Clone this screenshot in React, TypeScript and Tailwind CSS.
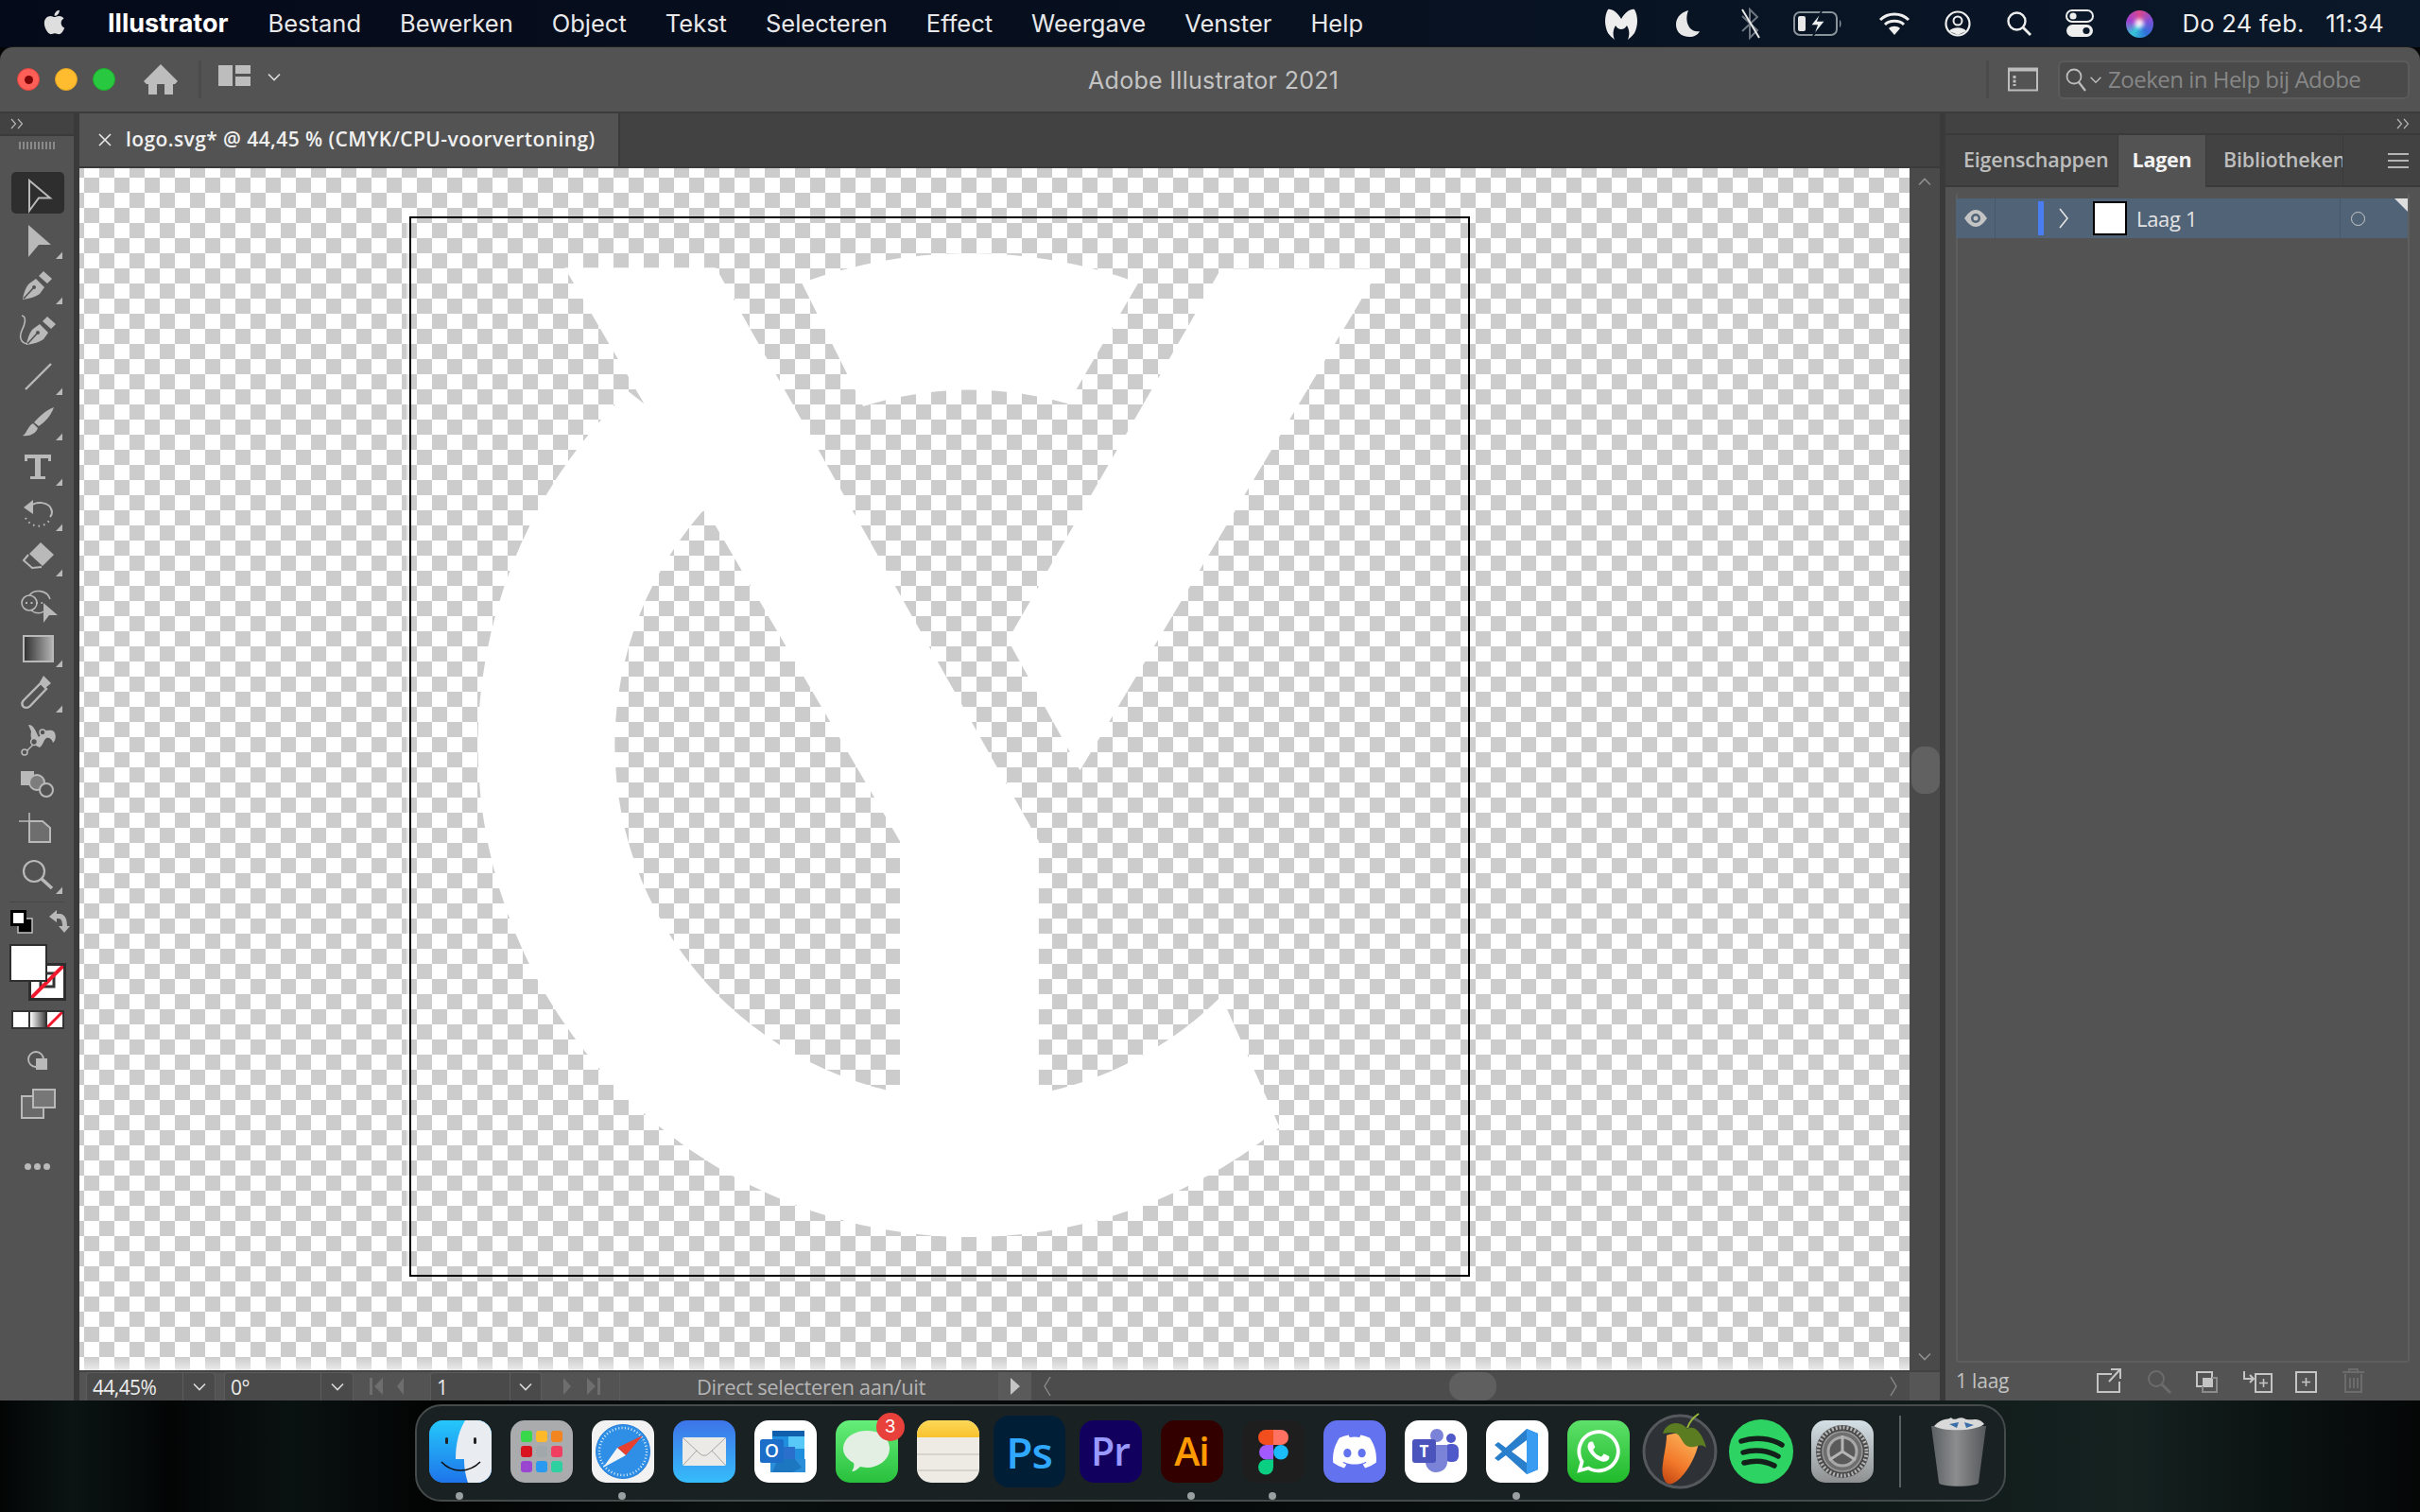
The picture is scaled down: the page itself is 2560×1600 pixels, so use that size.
import type { ReactNode } from "react";
import { FaApple, FaDiscord, FaWhatsapp } from "react-icons/fa";

const MENUS = ["Bestand", "Bewerken", "Object", "Tekst", "Selecteren", "Effect", "Weergave", "Venster", "Help"];
const C = "#b9b9b9";

// Tool icons are drawn in a 78x48 box, one slot per tool
function Flag() {
  return <path d="M66 36.5V44H59Z" fill={C} />;
}

const Nib = () => (
  <>
    <path d="M24 39C25 31 28 25 31 22L38 17L47 26L42 33C38 36 32 38 24 39Z" fill={C} />
    <path d="M25 38L35 27" stroke="#535353" strokeWidth="1.6" />
    <circle cx="36" cy="26" r="2" fill="#535353" />
    <path d="M41 14L46 9L55 17L50 22Z" fill={C} />
  </>
);

const TOOLS: ReactNode[] = [
  <path key="s" d="M31 9L53 27.5H41L31 41Z" fill="none" stroke={C} strokeWidth="2" />,
  <g key="d"><path d="M30 8L54 29H41L30 42Z" fill={C} /><Flag /></g>,
  <g key="p"><Nib /><Flag /></g>,
  <g key="c">
    <g transform="translate(4 0)"><Nib /></g>
    <path d="M23 8C29 9 26 18 23 24C20 31 22 37 29 38" fill="none" stroke={C} strokeWidth="1.6" />
  </g>,
  <g key="l"><path d="M27 38L54 11" stroke={C} strokeWidth="2.4" /><Flag /></g>,
  <g key="b">
    <path d="M57 9C54 18 47 25 41 29L36 25C42 18 49 12 57 9Z" fill={C} />
    <path d="M35 26L40 31C38 37 31 40 24 39C29 36 29 29 35 26Z" fill={C} />
    <Flag />
  </g>,
  <g key="t">
    <path d="M26 18V11H54V18H51V15H43V34H48V37H32V34H37V15H29V18Z" fill={C} />
    <Flag />
  </g>,
  <g key="r">
    <path d="M30 20C36 11 54 12 55 24C55 26 54 28 53 29" fill="none" stroke={C} strokeWidth="2" />
    <path d="M25 19L35 11V26Z" fill={C} />
    <path d="M27 30C33 41 46 41 52 33" fill="none" stroke={C} strokeWidth="2" strokeDasharray="1.6 4" />
    <Flag />
  </g>,
  <g key="e">
    <path d="M43 8L57 21L45 33L31 20Z" fill={C} />
    <path d="M30 21L25 27L34 35L44 34" fill="none" stroke={C} strokeWidth="2" />
    <Flag />
  </g>,
  <g key="h">
    <circle cx="31" cy="24" r="8" fill="none" stroke={C} strokeWidth="1.6" />
    <path d="M31 16C36 9 50 10 53 20M33 32C38 36 44 35 46 33" fill="none" stroke={C} strokeWidth="1.6" />
    <path d="M27 24H45" stroke={C} strokeWidth="1.8" strokeDasharray="2 3.5" />
    <path d="M46 24L61 37H52L46 45Z" fill={C} />
  </g>,
  <g key="g">
    <rect x="25" y="11" width="31" height="27" fill="url(#grad)" stroke={C} strokeWidth="2" />
    <Flag />
  </g>,
  <g key="i">
    <path d="M46 5L54 13L48 18L42 12Z" fill={C} />
    <path d="M43 13L49 19L32 37C29 40 25 39 24 37C23 35 23 33 25 31Z" fill="none" stroke={C} strokeWidth="2.4" />
    <Flag />
  </g>,
  <g key="w">
    <path d="M30 9C36 9 37 15 41 22C46 15 53 13 57 16C60 20 59 26 56 28C55 24 52 22 49 23C46 25 46 30 42 33C36 31 31 24 33 16C32 14 31 11 30 9Z" fill={C} />
    <path d="M28 37L50 15" stroke={C} strokeWidth="1.4" />
    <circle cx="26" cy="38" r="3" fill="#535353" stroke={C} strokeWidth="1.5" />
    <circle cx="36" cy="27" r="3.4" fill="#535353" stroke={C} strokeWidth="1.5" />
    <circle cx="45" cy="17" r="3" fill="#535353" stroke={C} strokeWidth="1.5" />
  </g>,
  <g key="q">
    <rect x="22" y="10" width="14" height="15" fill={C} />
    <circle cx="39" cy="22" r="8" fill="#7d7d7d" stroke={C} strokeWidth="2" />
    <circle cx="49" cy="30" r="7" fill="#535353" stroke={C} strokeWidth="2" />
  </g>,
  <g key="a">
    <path d="M20 15H34M31 6V19" stroke={C} strokeWidth="1.6" />
    <path d="M31 15H45L53 22V37H31Z" fill="#6e6e6e" stroke={C} strokeWidth="2" />
  </g>,
  <g key="z">
    <circle cx="36" cy="20" r="11" fill="none" stroke={C} strokeWidth="2.2" />
    <path d="M44 28L55 38" stroke={C} strokeWidth="3.6" />
    <Flag />
  </g>,
];

function Slot({ children }: { children: ReactNode }) {
  return (
    <svg width="78" height="48" viewBox="0 0 78 48" className="block shrink-0">
      <defs>
        <linearGradient id="grad" x1="0" x2="1">
          <stop offset="0" stopColor="#2f2f2f" />
          <stop offset="1" stopColor="#b5b5b5" />
        </linearGradient>
      </defs>
      {children}
    </svg>
  );
}

function Chevron({ className = "" }: { className?: string }) {
  return (
    <svg width="14" height="9" viewBox="0 0 14 9" className={className}>
      <path d="M1 1.5L7 7.5L13 1.5" fill="none" stroke="currentColor" strokeWidth="1.6" />
    </svg>
  );
}

function DoubleChevron() {
  return (
    <svg width="14" height="12" viewBox="0 0 14 12" className="text-[#b5b5b5]">
      <path d="M1 1L5.5 6L1 11M8 1L12.5 6L8 11" fill="none" stroke="currentColor" strokeWidth="1.2" />
    </svg>
  );
}

function ToolPanel() {
  return (
    <div className="w-[84px] shrink-0 flex bg-[#3a3a3a]">
      <div className="w-[78px] bg-[#535353] flex flex-col relative">
        <div className="h-[24px] bg-[#424242] border-b-2 border-[#3a3a3a] pl-[11px] flex items-center">
          <DoubleChevron />
        </div>
        <div className="h-[38px] flex justify-center pt-[6px]">
          <div className="w-[38px] h-[8px] bg-[repeating-linear-gradient(90deg,#8a8a8a_0_2px,transparent_2px_4px)]" />
        </div>
        <div className="relative">
          <div className="absolute left-[12px] top-0 w-[56px] h-[44px] rounded-[5px] bg-[#2e2e2e]" />
          <div className="relative flex flex-col">
            {TOOLS.map((t, i) => (
              <Slot key={i}>{t}</Slot>
            ))}
          </div>
        </div>
        <div className="mx-[10px] h-px bg-[#474747] mt-[4px]" />
        <ColorControls />
      </div>
    </div>
  );
}

function ColorControls() {
  return (
    <div className="flex flex-col">
      <svg width="78" height="34" viewBox="0 0 78 34" className="block mt-[6px]">
        <rect x="19" y="11" width="15" height="15" fill="#000" stroke="#c0c0c0" strokeWidth="1.5" />
        <rect x="11" y="2" width="17" height="17" fill="#c0c0c0" />
        <rect x="12.5" y="3.5" width="14" height="14" fill="#fff" stroke="#000" strokeWidth="3" />
        <path d="M52 9L60 2V6H64C69 7 71 12 71 19H74L68 26L62 19H66C66 14 65 11 62 11H60V15Z" fill={C} />
      </svg>
      <div className="relative h-[62px] ml-[10px] mt-[4px]">
        <div className="absolute left-[20px] top-[20px] w-[40px] h-[40px] bg-white border-[3px] border-[#2e2e2e] overflow-hidden">
          <svg viewBox="0 0 34 34" className="w-full h-full">
            <rect x="10" y="8" width="14" height="14" fill="none" stroke="#333" strokeWidth="3" />
            <path d="M0 34L34 0" stroke="#f0182c" strokeWidth="4" />
          </svg>
        </div>
        <div className="absolute left-0 top-0 w-[40px] h-[40px] bg-white border-[2px] border-[#2e2e2e]" />
      </div>
      <div className="ml-[12px] mt-[8px] w-[56px] h-[20px] flex border-2 border-[#333] gap-[2px] bg-[#333]">
        <div className="flex-1 bg-white" />
        <div className="flex-1 bg-[linear-gradient(90deg,#fff,#444)]" />
        <div className="flex-1 bg-white overflow-hidden">
          <svg viewBox="0 0 16 16" className="w-full h-full" preserveAspectRatio="none">
            <path d="M0 16L16 0" stroke="#f0182c" strokeWidth="3" />
          </svg>
        </div>
      </div>
      <svg width="78" height="98" viewBox="0 0 78 98" className="block mt-[21px]">
        <circle cx="38" cy="11" r="8" fill="none" stroke={C} strokeWidth="1.8" />
        <rect x="38" y="10" width="12" height="12" fill={C} />
        <rect x="23" y="50" width="23" height="23" fill="#6a6a6a" stroke={C} strokeWidth="2" />
        <rect x="35" y="43" width="23" height="19" fill="#777" stroke={C} strokeWidth="2" />
      </svg>
      <div className="flex justify-center gap-[3px] mt-[23px]">
        <div className="w-[7px] h-[7px] rounded-full bg-[#b9b9b9]" />
        <div className="w-[7px] h-[7px] rounded-full bg-[#b9b9b9]" />
        <div className="w-[7px] h-[7px] rounded-full bg-[#b9b9b9]" />
      </div>
    </div>
  );
}

function MenuBar() {
  return (
    <div className="h-[50px] shrink-0 flex items-center bg-[linear-gradient(90deg,#050a1a,#07101f_50%,#0a1829)] text-[#e8e8ea] text-[25.5px] pl-[43px] pr-[38px]">
      <FaApple className="text-[29px] text-[#dedede] -mt-[4px]" />
      <span className="font-bold text-[27px] ml-[42px] mr-[42px] text-white">Illustrator</span>
      <div className="flex gap-[41px]">
        {MENUS.map((m) => (
          <span key={m}>{m}</span>
        ))}
      </div>
      <div className="ml-auto flex items-center text-[#eeeeee]">
        <svg width="38" height="36" viewBox="0 0 38 36" className="mr-[38px]">
          <path d="M5 3C9 2 15 6 19 13C23 6 29 2 33 3C37 10 37 20 33 28C31 31 28 33 26 35C28 30 28 25 25 20C23 23 21 24 19 24C17 24 15 23 13 20C10 25 10 30 12 35C10 33 7 31 5 28C1 20 1 10 5 3Z" fill="#eee" />
        </svg>
        <svg width="27" height="30" viewBox="0 0 27 30" className="mr-[41px]">
          <path d="M14 1C6 3 1 9 1 16C1 24 7 29 15 29C20 29 24 27 26 23C16 25 9 14 14 1Z" fill="#e8e8e8" />
        </svg>
        <svg width="22" height="36" viewBox="0 0 22 36" className="mr-[35px]">
          <path d="M3 10L19 25L11 33V3L19 11L3 26" fill="none" stroke="#6e7680" strokeWidth="2" />
          <path d="M3 3L21 33" stroke="#e8e8e8" strokeWidth="2" />
        </svg>
        <svg width="52" height="26" viewBox="0 0 52 26" className="mr-[38px]">
          <rect x="1" y="1" width="45" height="24" rx="6" fill="none" stroke="#8a929a" strokeWidth="2" />
          <rect x="5" y="5" width="8" height="16" rx="2" fill="#e8e8e8" />
          <path d="M49 9V17C51 16 51 10 49 9Z" fill="#8a929a" />
          <path d="M30 0L18 15H25L21 26L34 10H26Z" fill="#eee" stroke="#0a1829" strokeWidth="1.5" />
        </svg>
        <svg width="34" height="26" viewBox="0 0 34 26" className="mr-[36px]">
          <path d="M2 9C10 1 24 1 32 9M7 14C12 9 22 9 27 14" fill="none" stroke="#eee" strokeWidth="3" />
          <path d="M11 18C14 15 20 15 23 18L17 25Z" fill="#eee" />
        </svg>
        <svg width="28" height="28" viewBox="0 0 28 28" className="mr-[37px]">
          <circle cx="14" cy="14" r="12.5" fill="none" stroke="#eee" strokeWidth="2.2" />
          <circle cx="14" cy="11" r="4.5" fill="none" stroke="#eee" strokeWidth="2" />
          <path d="M5 22C8 17 20 17 23 22L14 26Z" fill="#eee" />
        </svg>
        <svg width="28" height="28" viewBox="0 0 28 28" className="mr-[35px]">
          <circle cx="11.5" cy="11.5" r="9" fill="none" stroke="#eee" strokeWidth="2.4" />
          <path d="M18 18L26 26" stroke="#eee" strokeWidth="2.8" />
        </svg>
        <svg width="30" height="30" viewBox="0 0 30 30" className="mr-[34px]">
          <rect x="1" y="1" width="28" height="12" rx="6" fill="#0a1829" stroke="#eee" strokeWidth="2" />
          <circle cx="8" cy="7" r="3.6" fill="#eee" />
          <rect x="1" y="16" width="28" height="13" rx="6.5" fill="#eee" />
          <circle cx="22" cy="22.5" r="3.6" fill="#0a1829" />
        </svg>
        <div className="w-[29px] h-[29px] rounded-full bg-[conic-gradient(#d9478f,#7d4fd8,#2f6fd8,#34c6d8,#a03fd0,#d9478f)] mr-[31px] flex items-center justify-center">
          <div className="w-[10px] h-[10px] rounded-full bg-white/90 blur-[2px]" />
        </div>
        <span className="whitespace-pre tracking-[0.3px]">Do 24 feb.   11:34</span>
      </div>
    </div>
  );
}

function Toolbar() {
  return (
    <div className="h-[68px] shrink-0 flex items-center relative">
      <div className="w-[24px] h-[24px] rounded-full bg-[#ff5f57] border border-[#e0443e] ml-[18px] flex items-center justify-center">
        <div className="w-[9px] h-[9px] rounded-full bg-[#7e0508]" />
      </div>
      <div className="w-[24px] h-[24px] rounded-full bg-[#febc2e] border border-[#dea123] ml-[16px]" />
      <div className="w-[24px] h-[24px] rounded-full bg-[#28c840] border border-[#1dad2b] ml-[16px]" />
      <svg width="36" height="32" viewBox="0 0 36 32" className="ml-[30px]">
        <path d="M18 0L36 18L33 21H31V32H22V21H14V32H5V21H3L0 18Z" fill="#bdbdbd" />
      </svg>
      <div className="w-[3px] h-[40px] bg-[#4b4b4b] ml-[22px]" />
      <svg width="34" height="22" viewBox="0 0 34 22" className="ml-[18px] -mt-[8px]">
        <path d="M0 0H15V22H0ZM18 0H34V9H18ZM18 12H34V22H18Z" fill="#bdbdbd" />
      </svg>
      <Chevron className="ml-[18px] -mt-[6px] text-[#dcdcdc]" />
      <span className="absolute left-[1151px] top-[20px] text-[25px] leading-[30px] tracking-[0.3px] text-[#c4c4c4]">Adobe Illustrator 2021</span>
      <div className="ml-auto flex items-center mr-[11px]">
        <div className="w-[3px] h-[40px] bg-[#4b4b4b] mr-[20px]" />
        <svg width="32" height="26" viewBox="0 0 32 26" className="mr-[21px]">
          <rect x="1" y="1.5" width="30" height="23" fill="none" stroke="#bdbdbd" strokeWidth="2" />
          <path d="M1 3H31" stroke="#bdbdbd" strokeWidth="3" />
          <path d="M7 9V20" stroke="#bdbdbd" strokeWidth="3" strokeDasharray="3 1.5" />
        </svg>
        <div className="w-[372px] h-[41px] bg-[#4a4a4a] border-2 border-[#5b5b5b] rounded-[6px] flex items-center pl-[6px]">
          <svg width="22" height="26" viewBox="0 0 22 26">
            <circle cx="9" cy="10" r="7.5" fill="none" stroke="#bdbdbd" strokeWidth="1.8" />
            <path d="M14 16L21 25" stroke="#bdbdbd" strokeWidth="2.2" />
          </svg>
          <Chevron className="ml-[3px] text-[#bdbdbd] scale-90" />
          <span className="ml-[6px] text-[24px] leading-none text-[#878787] font-['Open_Sans',sans-serif] tracking-[-0.5px]">Zoeken in Help bij Adobe</span>
        </div>
      </div>
    </div>
  );
}

function BoxSelect({ w, split, label }: { w: number; split: number; label: string }) {
  return (
    <div className="h-[30px] self-end flex bg-[#4a4a4a] rounded-t-[4px] border border-b-0 border-[#5c5c5c]" style={{ width: w }}>
      <div className="pl-[6px] text-[21px] leading-[30px] text-[#ececec] font-['Open_Sans',sans-serif] tracking-[-0.6px]" style={{ width: split }}>
        {label}
      </div>
      <div className="flex-1 border-l border-[#5c5c5c] flex items-center justify-center text-[#dcdcdc]">
        <Chevron />
      </div>
    </div>
  );
}

function NavArrows({ dir }: { dir: "back" | "fwd" }) {
  return (
    <svg width="50" height="24" viewBox="0 0 50 24" className="self-center">
      {dir === "back" ? (
        <path d="M2 3H5V21H2ZM16 3V21L7 12ZM38 3V21L31 12Z" fill="#6e6e6e" />
      ) : (
        <path d="M8 3V21L16 12ZM33 3V21L42 12ZM44 3H47V21H44Z" fill="#6e6e6e" />
      )}
    </svg>
  );
}

function StatusBar() {
  return (
    <div className="h-[32px] shrink-0 bg-[#535353] flex items-stretch border-t-2 border-[#424242] pl-[7px]">
      <BoxSelect w={137} split={101} label="44,45%" />
      <div className="w-[9px]" />
      <BoxSelect w={137} split={101} label="0°" />
      <div className="w-[15px]" />
      <NavArrows dir="back" />
      <div className="w-[16px]" />
      <BoxSelect w={118} split={83} label="1" />
      <div className="w-[15px]" />
      <NavArrows dir="fwd" />
      <div className="w-[18px] border-r border-[#5c5c5c]" />
      <div className="w-[401px] pl-[4px] text-center text-[22px] leading-[30px] text-[#b5b5b5] font-['Open_Sans',sans-serif] tracking-[-0.4px] border-r border-[#5c5c5c]">
        Direct selecteren aan/uit
      </div>
      <div className="w-[34px] bg-[#5a5a5a] flex items-center justify-center">
        <svg width="10" height="18" viewBox="0 0 10 18"><path d="M0 0L10 9L0 18Z" fill="#c4c4c4" /></svg>
      </div>
      <div className="flex-1 flex items-center relative bg-[#4c4c4c]">
        <svg width="10" height="22" viewBox="0 0 10 22" className="ml-[12px]"><path d="M8 1L2 11L8 21" fill="none" stroke="#8a8a8a" strokeWidth="1.4" /></svg>
        <div className="absolute left-[442px] top-0 w-[50px] h-[30px] rounded-[14px] bg-[#5f5f5f]" />
        <svg width="10" height="22" viewBox="0 0 10 22" className="ml-auto mr-[12px]"><path d="M2 1L8 11L2 21" fill="none" stroke="#8a8a8a" strokeWidth="1.4" /></svg>
      </div>
      <div className="w-[32px] bg-[#565656]" />
    </div>
  );
}

// a point on the logo's ring, in the logo's own coordinates
const ring = (r: number, deg: number) => {
  const a = (deg * Math.PI) / 180;
  return `${(820 + r * Math.cos(a)).toFixed(2)} ${(775 + r * Math.sin(a)).toFixed(2)}`;
};

function Logo() {
  const body = `M${ring(716, 226)}A716 716 0 0 0 ${ring(716, 51)}L${ring(517, 45)}A517 517 0 0 1 ${ring(517, 221)}L500 400Z`;
  const top = `M${ring(716, 250)}A716 716 0 0 1 ${ring(716, 290)}L${ring(517, 286)}A517 517 0 0 0 ${ring(517, 252.5)}Z`;
  return (
    <svg viewBox="0 0 1568 1568" className="absolute left-[346px] top-[47px] w-[1140px] h-[1140px]">
      <g fill="#fff">
        <path d={top} />
        <path d={body} />
        <path d="M230 80L450 80L920 915V1300H718V915Z" />
        <path d="M1185 82H1405V100L980 812L875 622Z" />
      </g>
    </svg>
  );
}

function Canvas() {
  return (
    <div className="flex-1 flex min-h-0">
      <div className="w-[1936px] relative overflow-hidden bg-[conic-gradient(#cccccc_25%,#ffffff_0_50%,#cccccc_0_75%,#ffffff_0)] bg-[length:32px_32px] bg-[position:5px_26px]">
        <div className="absolute left-[349px] top-[51px] w-[1122px] h-[1122px] border-2 border-black shadow-[-3px_0_0_rgba(255,255,255,0.5)]" />
        <Logo />
        <div className="absolute inset-x-0 bottom-0 h-[14px] bg-[linear-gradient(180deg,transparent,rgba(255,255,255,0.6))]" />
      </div>
      <div className="w-[32px] bg-[#4a4a4a] relative flex flex-col items-center justify-between py-[10px] text-[#8f8f8f]">
        <Chevron className="rotate-180" />
        <div className="absolute left-[2px] top-[612px] w-[30px] h-[50px] rounded-[13px] bg-[#616161]" />
        <Chevron />
      </div>
    </div>
  );
}

function RightPanel() {
  return (
    <div className="flex-1 flex flex-col bg-[#535353] min-w-0">
      <div className="h-[23px] bg-[#424242] border-b-2 border-[#3a3a3a] flex items-center justify-end pr-[11px]">
        <DoubleChevron />
      </div>
      <div className="h-[55px] bg-[#424242] flex text-[21.5px] font-semibold font-['Open_Sans',sans-serif] tracking-[-0.2px]">
        <div className="w-[182px] border-b-2 border-[#3a3a3a] pt-[10px] pl-[19px] text-[#bdbdbd] whitespace-nowrap">Eigenschappen</div>
        <div className="w-[94px] bg-[#535353] pt-[10px] text-center text-[#f2f2f2] font-bold border-x border-[#3a3a3a]">Lagen</div>
        <div className="w-[145px] border-b-2 border-r border-[#3a3a3a] pt-[10px] pl-[18px] text-[#bdbdbd] overflow-hidden whitespace-nowrap">Bibliotheken</div>
        <div className="flex-1 border-b-2 border-[#3a3a3a] flex items-center justify-end pr-[12px]">
          <svg width="22" height="16" viewBox="0 0 22 16"><path d="M0 1H22M0 8H22M0 15H22" stroke="#b5b5b5" strokeWidth="2" /></svg>
        </div>
      </div>
      <div className="flex-1 mx-[11px] mt-[6px] border-2 border-t-0 border-[#5e5e5e] rounded-[4px]">
        <div className="h-[42px] mt-[6px] -mx-[2px] mr-[0px] bg-[#506377] flex items-center relative text-[#e4e4e4]">
          <div className="w-[42px] h-full border-r border-[#475869] flex items-center justify-center">
            <svg width="24" height="18" viewBox="0 0 24 18">
              <path d="M0 9C4 3 8 0 12 0C16 0 20 3 24 9C20 15 16 18 12 18C8 18 4 15 0 9Z" fill="#c4c4c4" />
              <circle cx="12" cy="9" r="5" fill="#506377" />
              <circle cx="12" cy="9" r="2.5" fill="#c4c4c4" />
            </svg>
          </div>
          <div className="w-[45px]" />
          <div className="w-[6px] h-[36px] bg-[#4a7cf2]" />
          <svg width="12" height="22" viewBox="0 0 12 22" className="ml-[15px]"><path d="M2 1L10 11L2 21" fill="none" stroke="#e4e4e4" strokeWidth="1.6" /></svg>
          <div className="w-[36px] h-[36px] bg-white border-2 border-black ml-[25px]" />
          <span className="ml-[10px] text-[22px] font-['Open_Sans',sans-serif] tracking-[-0.3px]">Laag 1</span>
          <div className="ml-auto w-[72px] h-full border-l border-[#475869] flex items-center pl-[11px]">
            <div className="w-[15px] h-[15px] rounded-full border-[1.5px] border-[#c8c8c8]" />
          </div>
          <svg width="14" height="14" viewBox="0 0 14 14" className="absolute right-0 top-0"><path d="M0 0H14V14Z" fill="#dedede" /></svg>
        </div>
      </div>
      <div className="h-[40px] shrink-0 flex items-center pl-[11px]">
        <span className="text-[21px] font-['Open_Sans',sans-serif] text-[#c2c2c2] tracking-[-0.2px]">1 laag</span>
        <svg width="300" height="28" viewBox="0 0 300 28" className="ml-[93px]">
          <path d="M16 6H1V25H24V14" fill="none" stroke="#c4c4c4" strokeWidth="2" />
          <path d="M13 14L24 2M15 1H25V11" fill="none" stroke="#c4c4c4" strokeWidth="2" />
          <circle cx="63" cy="11" r="8" fill="none" stroke="#6c6c6c" strokeWidth="2" />
          <path d="M69 17L78 26" stroke="#6c6c6c" strokeWidth="3" />
          <rect x="106" y="4" width="16" height="15" fill="#535353" stroke="#c4c4c4" strokeWidth="2" />
          <rect x="112" y="10" width="9" height="8" fill="#c4c4c4" />
          <path d="M122 10H127V25H112V19" fill="none" stroke="#8b8b8b" strokeWidth="2" />
          <path d="M156 3V11H166M162 7L166 11L162 15" fill="none" stroke="#c4c4c4" strokeWidth="2" />
          <rect x="168" y="6" width="17" height="19" fill="none" stroke="#c4c4c4" strokeWidth="2" />
          <path d="M176.5 11V20M172 15.5H181" stroke="#c4c4c4" strokeWidth="1.6" />
          <rect x="211" y="4" width="21" height="21" fill="none" stroke="#c4c4c4" strokeWidth="2" />
          <path d="M221.5 10V19M217 14.5H226" stroke="#c4c4c4" strokeWidth="1.6" />
          <path d="M260 4H283M267 4V1H276V4M263 6V25H280V6M268 10V21M272 10V21M276 10V21" fill="none" stroke="#6c6c6c" strokeWidth="2" />
        </svg>
      </div>
    </div>
  );
}

/* ── Dock ── */

function Tile({ className = "", children }: { className?: string; children?: ReactNode }) {
  return <div className={`w-[66px] h-[66px] rounded-[15px] overflow-hidden relative flex items-center justify-center ${className}`}>{children}</div>;
}

function Glyph({ text, color, size }: { text: string; color: string; size: string }) {
  return <span className={`${size} font-semibold font-['Open_Sans',sans-serif] tracking-[-1px] leading-none`} style={{ color }}>{text}</span>;
}

function Finder() {
  return (
    <Tile className="bg-[#2a9cf6]">
      <svg viewBox="0 0 66 66" className="w-full h-full">
        <defs>
          <linearGradient id="fb" x1="0" y1="0" x2="0" y2="1"><stop offset="0" stopColor="#25c8fb" /><stop offset="1" stopColor="#1e74ea" /></linearGradient>
        </defs>
        <rect width="66" height="66" fill="url(#fb)" />
        <path d="M38 0H66V66H41C38 56 37 50 37 41H28C28 25 31 12 38 0Z" fill="#e9edf2" />
        <rect x="17" y="18" width="3" height="7" rx="1.5" fill="#222" />
        <rect x="47" y="18" width="3" height="7" rx="1.5" fill="#222" />
        <path d="M13 44C24 56 42 56 54 44" fill="none" stroke="#111" strokeWidth="1.6" />
      </svg>
    </Tile>
  );
}

function Launchpad() {
  const cells = ["bg-[#38d84a]", "bg-[#fdb92a]", "bg-[#f2851f]", "bg-[#d8151f]", "bg-[#a0a8ac]", "bg-[#f03e60]", "bg-[#9a46d0]", "bg-[#2a9af0]", "bg-[#2ecfa0]"];
  return (
    <Tile className="bg-[#a9abad]">
      <div className="grid grid-cols-3 gap-[4px]">
        {cells.map((c, i) => (
          <div key={i} className={`w-[12px] h-[12px] rounded-[3px] ${c}`} />
        ))}
      </div>
    </Tile>
  );
}

function Safari() {
  return (
    <Tile className="bg-[#f2f2f2]">
      <svg viewBox="0 0 66 66" className="w-full h-full">
        <circle cx="33" cy="33" r="28.5" fill="#2f8fe6" stroke="#2a7fd8" />
        <circle cx="33" cy="33" r="25" fill="none" stroke="#dcecf8" strokeWidth="2.5" strokeDasharray="1 2.4" />
        <path d="M54 16L27 29L36 37Z" fill="#e8402f" />
        <path d="M12 50L27 29L36 37Z" fill="#f4f4f4" />
      </svg>
    </Tile>
  );
}

function Mail() {
  return (
    <Tile className="bg-[linear-gradient(180deg,#3d74e8,#36bdfa)]">
      <svg viewBox="0 0 66 66" className="w-full h-full">
        <rect x="10" y="18" width="46" height="30" rx="2" fill="#eceae6" />
        <path d="M11 19L28 35C31 38 35 38 38 35L55 19M11 47L25 32M55 47L41 32" fill="none" stroke="#a5a5a5" strokeWidth="1" />
      </svg>
    </Tile>
  );
}

function Outlook() {
  return (
    <Tile className="bg-white">
      <svg viewBox="0 0 66 66" className="w-full h-full">
        <rect x="19" y="11" width="34" height="38" fill="#1f8fdd" />
        <rect x="19" y="11" width="34" height="6" fill="#0f5fad" />
        <rect x="36" y="17" width="17" height="13" fill="#58c8f8" />
        <rect x="27" y="28" width="16" height="13" fill="#2a6fcc" />
        <path d="M17 41L54 41V55H17Z" fill="#2a8fd8" />
        <path d="M25 41H43L50 50L40 55H19Z" fill="#1666b0" opacity="0.6" />
        <rect x="6" y="20" width="25" height="25" rx="2.5" fill="#1c6ec8" />
        <text x="18.5" y="39" textAnchor="middle" fill="#fff" fontSize="19" fontWeight="600" fontFamily="Open Sans, sans-serif">O</text>
      </svg>
    </Tile>
  );
}

function Messages() {
  return (
    <div className="relative">
      <Tile className="bg-[linear-gradient(180deg,#66ee7a,#28c03c)]">
        <svg viewBox="0 0 66 66" className="w-full h-full">
          <path d="M33 11C52 11 57 23 57 30C57 42 45 50 33 50C30 50 27 49 26 49C23 52 20 54 17 54C19 51 20 48 19 45C12 41 8 36 8 30C8 19 19 11 33 11Z" fill="#e4efe4" />
        </svg>
      </Tile>
      <div className="absolute -right-[7px] -top-[8px] w-[30px] h-[30px] rounded-full bg-[#e8403a] text-white text-[19px] leading-[30px] text-center">3</div>
    </div>
  );
}

function Notes() {
  return (
    <Tile className="bg-[#eeebe4]">
      <div className="absolute inset-x-0 top-0 h-[18px] bg-[linear-gradient(180deg,#fdd858,#f7c22e)]" />
      <div className="absolute inset-x-0 top-[35px] h-[2px] bg-[#d7d4cd]" />
      <div className="absolute inset-x-0 top-[52px] h-[2px] bg-[#d7d4cd]" />
    </Tile>
  );
}

function Figma() {
  return (
    <Tile className="bg-[#1e1e1e]">
      <svg viewBox="0 0 66 66" className="w-full h-full">
        <path d="M25 10H33V26H25A8 8 0 0 1 25 10Z" fill="#f24e1e" />
        <path d="M33 10H41A8 8 0 0 1 41 26H33Z" fill="#ff7262" />
        <path d="M25 26H33V41.5H25A7.8 7.8 0 0 1 25 26Z" fill="#a259ff" />
        <circle cx="41" cy="33.7" r="7.8" fill="#1abcfe" />
        <path d="M25 41.5H33V49.5A8 8 0 1 1 25 41.5Z" fill="#0acf83" />
      </svg>
    </Tile>
  );
}

function Teams() {
  return (
    <Tile className="bg-white">
      <svg viewBox="0 0 66 66" className="w-full h-full">
        <circle cx="34" cy="16" r="7" fill="#7b83d8" />
        <circle cx="49" cy="19" r="5" fill="#5059c9" />
        <rect x="42" y="25" width="15" height="19" rx="6" fill="#5059c9" />
        <path d="M22 26H45V44C45 51 39 55 33 55C27 55 22 50 22 44Z" fill="#7b83d8" />
        <rect x="8" y="20" width="25" height="25" rx="3" fill="#4b53bc" />
        <text x="20.5" y="39" textAnchor="middle" fill="#fff" fontSize="17" fontWeight="700" fontFamily="Open Sans, sans-serif">T</text>
      </svg>
    </Tile>
  );
}

function VSCode() {
  return (
    <Tile className="bg-white">
      <svg viewBox="0 0 66 66" className="w-full h-full">
        <path d="M9 26L13 23L21 29L43 9L55 14V52L43 57L21 37L13 43L9 40L17 33Z" fill="#2a7fcc" />
        <path d="M43 9L55 14V52L43 57Z" fill="#3a9cf0" />
        <path d="M43 21V45L27 33Z" fill="#fff" />
      </svg>
    </Tile>
  );
}

function FLStudio() {
  return (
    <svg width="80" height="82" viewBox="0 0 80 82" className="shrink-0">
      <defs>
        <linearGradient id="fl" x1="0.7" y1="0" x2="0.2" y2="1"><stop offset="0" stopColor="#fbb45a" /><stop offset="0.6" stopColor="#f2792a" /><stop offset="1" stopColor="#c84a14" /></linearGradient>
      </defs>
      <circle cx="40" cy="41" r="38" fill="#2e3136" stroke="#55585c" strokeWidth="3" />
      <path d="M26 24C36 20 50 22 60 32C56 50 44 70 32 75C24 78 20 66 22 54C23 44 26 34 26 24Z" fill="url(#fl)" />
      <path d="M22 22C26 9 40 8 48 17C56 12 64 22 68 37C60 31 58 38 50 36C42 34 42 24 36 22C30 20 26 22 22 22Z" fill="#5c7c22" />
      <path d="M48 16C50 10 54 5 60 1" fill="none" stroke="#9ab83c" strokeWidth="2" />
    </svg>
  );
}

function Spotify() {
  return (
    <svg width="68" height="68" viewBox="0 0 68 68" className="shrink-0">
      <circle cx="34" cy="34" r="34" fill="#2ed463" />
      <path d="M13 23C27 18 45 20 56 27M15 35C27 31 42 33 52 39M16 46C27 43 39 44 48 49" fill="none" stroke="#14201a" strokeWidth="5.5" strokeLinecap="round" />
    </svg>
  );
}

function Settings() {
  return (
    <Tile className="bg-[linear-gradient(180deg,#d4e0e6,#8e9090)]">
      <svg viewBox="0 0 66 66" className="w-full h-full">
        <circle cx="33" cy="33" r="28" fill="#4a4a4a" />
        <circle cx="33" cy="33" r="25.5" fill="none" stroke="#b5b5b5" strokeWidth="4" strokeDasharray="2 2" />
        <circle cx="33" cy="33" r="21" fill="#6f6f6f" stroke="#999" strokeWidth="1.5" />
        <circle cx="33" cy="33" r="15" fill="#5a5a5a" stroke="#a8a8a8" strokeWidth="3" />
        <path d="M33 33V16M33 33L47 42M33 33L19 42" stroke="#b5b5b5" strokeWidth="3" />
      </svg>
    </Tile>
  );
}

function Trash() {
  return (
    <svg width="60" height="78" viewBox="0 0 60 78" className="shrink-0">
      <defs>
        <linearGradient id="tr" x1="0" x2="1"><stop offset="0" stopColor="#5c6062" /><stop offset="0.45" stopColor="#8b8d8e" /><stop offset="1" stopColor="#55585a" /></linearGradient>
      </defs>
      <path d="M1 12H59L51 72C50 77 10 77 9 72Z" fill="url(#tr)" />
      <path d="M4 12C12 3 18 6 22 3C26 8 30 1 36 4C42 8 50 1 57 10C48 18 12 18 4 12Z" fill="#d9d9d9" />
      <path d="M20 10L30 8L28 14ZM36 8L46 11L38 14Z" fill="#3b6ea8" />
    </svg>
  );
}

const DOCK: { icon: ReactNode; dot?: boolean }[] = [
  { icon: <Finder />, dot: true },
  { icon: <Launchpad /> },
  { icon: <Safari />, dot: true },
  { icon: <Mail /> },
  { icon: <Outlook /> },
  { icon: <Messages /> },
  { icon: <Notes /> },
  { icon: <Tile className="bg-[#001e36] !w-[76px] !h-[76px] shrink-0 rounded-[16px]"><Glyph text="Ps" color="#31a8ff" size="text-[46px]" /></Tile> },
  { icon: <Tile className="bg-[#12005e]"><Glyph text="Pr" color="#9999ff" size="text-[41px]" /></Tile> },
  { icon: <Tile className="bg-[#330000]"><Glyph text="Ai" color="#ff9a00" size="text-[41px]" /></Tile>, dot: true },
  { icon: <Figma />, dot: true },
  { icon: <Tile className="bg-[#6373f0]"><FaDiscord className="text-[50px] text-white" /></Tile> },
  { icon: <Teams /> },
  { icon: <VSCode />, dot: true },
  { icon: <Tile className="bg-[linear-gradient(180deg,#5ee06a,#1fba2a)]"><FaWhatsapp className="text-[52px] text-white" /></Tile> },
  { icon: <FLStudio /> },
  { icon: <Spotify /> },
  { icon: <Settings /> },
];

function Dock() {
  return (
    <div className="w-[1683px] h-[103px] bg-[#1a2122] border-2 border-[#454a4b] rounded-[28px] flex items-center pl-[13px] pb-[4px] mt-[4px]">
      <div className="flex gap-[20px] items-center">
        {DOCK.map((d, i) => (
          <div key={i} className="w-[66px] h-[66px] relative flex items-center justify-center">
            {d.icon}
            {d.dot && <div className="absolute left-[28px] top-[76px] w-[8px] h-[8px] rounded-full bg-[#9a9fa0]" />}
          </div>
        ))}
      </div>
      <div className="w-[2px] h-[76px] bg-[#5a5f60] ml-[27px] mr-[31px]" />
      <Trash />
    </div>
  );
}

export default function App() {
  return (
    <div className="w-[2560px] h-[1600px] overflow-hidden flex flex-col font-['Inter',sans-serif] bg-[linear-gradient(90deg,#030505,#0b1413_3%,#030505_7%,#0a1211_12%,#020303_18%,#0a1110_30%,#050707_45%,#0c1413_70%,#152220_88%,#0b1312_94%,#050707)]">
      <MenuBar />
      <div className="h-[1432px] shrink-0 flex flex-col rounded-t-[14px] bg-[#535353] overflow-hidden shadow-[0_-1px_0_#1a1a1a]">
        <Toolbar />
        <div className="h-[2px] bg-[#3c3c3c]" />
        <div className="flex-1 flex min-h-0">
          <ToolPanel />
          <div className="w-[1968px] shrink-0 flex flex-col">
            <div className="h-[58px] shrink-0 bg-[#424242] flex border-b-2 border-[#3a3a3a]">
              <div className="w-[572px] bg-[#535353] flex items-center text-[#f0f0f0] border-r-2 border-[#3a3a3a]">
                <svg width="14" height="14" viewBox="0 0 14 14" className="ml-[20px]"><path d="M1 1L13 13M13 1L1 13" stroke="#e8e8e8" strokeWidth="1.6" /></svg>
                <span className="ml-[15px] text-[21px] font-semibold font-['Open_Sans',sans-serif] tracking-[0.42px]">logo.svg* @ 44,45 % (CMYK/CPU-voorvertoning)</span>
              </div>
            </div>
            <Canvas />
            <StatusBar />
          </div>
          <div className="w-[6px] bg-[#3a3a3a]" />
          <RightPanel />
        </div>
      </div>
      <div className="flex-1 flex justify-center items-start">
        <Dock />
      </div>
    </div>
  );
}
